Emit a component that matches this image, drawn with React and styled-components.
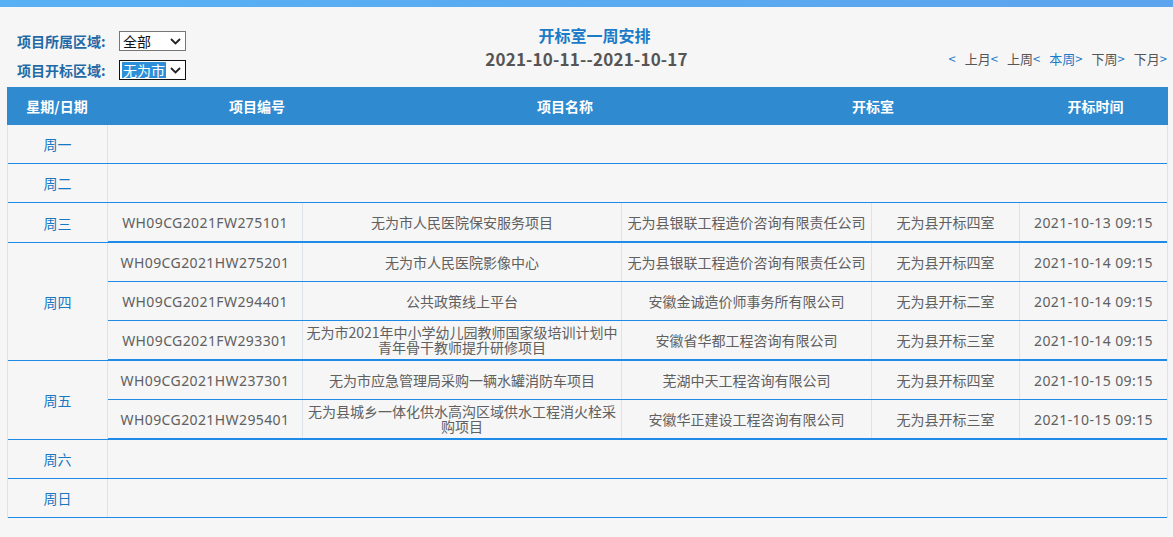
import React from 'react';
import styled, { createGlobalStyle } from 'styled-components';

const GlobalStyle = createGlobalStyle`
  html, body {
    margin: 0;
    padding: 0;
    background: #f6f6f6;
    font-family: "Noto Sans CJK SC", "Noto Sans", sans-serif;
  }
`;

const TopBar = styled.div`
  height: 7px;
  background: linear-gradient(90deg, #58b1f4 0%, #5ca4ee 100%);
`;

const Toolbar = styled.div`
  display: grid;
  grid-template-columns: 1fr auto 1fr;
  padding: 18px 6px 7px 6px;
`;

const Filters = styled.div`
  display: flex;
  flex-direction: column;
  gap: 9px;
  margin: 6px 0 0 11px;
`;

const FilterRow = styled.div`
  display: flex;
  align-items: center;
  height: 20px;
`;

const FilterLabel = styled.span`
  width: 102px;
  font-size: 14px;
  font-weight: 700;
  color: #2369a6;
`;

const SelectBox = styled.div`
  box-sizing: border-box;
  width: 67px;
  height: 20px;
  display: flex;
  align-items: center;
  justify-content: space-between;
  padding: 0 4px 0 2px;
  background: #fff;
  border: 1px solid ${p => (p.$focused ? '#111' : '#767676')};
  font-size: 14px;
  color: #111;
`;

const SelectText = styled.span`
  line-height: 16px;
  padding: 0 1px;
  background: ${p => (p.$focused ? '#2d8fd8' : 'transparent')};
  color: ${p => (p.$focused ? '#fff' : '#111')};
`;

const Chevron = () => (
  <svg width="11" height="7" viewBox="0 0 11 7">
    <path d="M1 1 L5.5 5.5 L10 1" fill="none" stroke="#222" strokeWidth="1.8" />
  </svg>
);

const TitleBlock = styled.div`
  display: flex;
  flex-direction: column;
  align-items: center;
  gap: 4px;
`;

const Title = styled.div`
  padding-left: 16px;
  font-size: 16px;
  line-height: 20px;
  font-weight: 700;
  color: #1b7bc8;
`;

const DateRange = styled.div`
  font-size: 17px;
  line-height: 20px;
  font-weight: 700;
  color: #555;
  letter-spacing: 0.2px;
`;

const Nav = styled.div`
  justify-self: end;
  align-self: end;
  margin-bottom: 11px;
  display: flex;
  font-size: 13px;
  line-height: 20px;
`;

const NavLink = styled.span`
  color: ${p => (p.$active ? '#1b7bc8' : '#555')};
  margin-left: 9px;
`;

const Arrow = styled.span`
  color: #1b7bc8;
`;

const Table = styled.div`
  margin: 0 5px 0 7px;
  border-left: 1px solid #dde3e9;
  border-right: 1px solid #dde3e9;
  font-size: 14px;
`;

const HeadRow = styled.div`
  display: grid;
  grid-template-columns: 100px 300px 316px 300px 1fr;
  height: 38px;
  margin: 0 -1px;
  background: #2f8ad0;
`;

const HeadCell = styled.div`
  display: flex;
  align-items: center;
  justify-content: center;
  color: #fff;
  font-weight: 700;
  font-size: 14px;
`;

const DayGroup = styled.div`
  display: flex;
  border-bottom: 1px solid #1e8be9;
`;

const DayCell = styled.div`
  flex: 0 0 99px;
  display: flex;
  align-items: center;
  justify-content: center;
  min-height: 38px;
  border-right: 1px solid #dde3e9;
  color: #1a78c2;
`;

const SubTable = styled.div`
  flex: 1;
  display: flex;
  flex-direction: column;
`;

const SubRow = styled.div`
  display: grid;
  grid-template-columns: 195px 319px 250px 148px 1fr;
  min-height: 38px;
  border-bottom: 1px solid #1e8be9;
`;

const Cell = styled.div`
  display: flex;
  align-items: center;
  justify-content: center;
  text-align: center;
  padding: 0 3px;
  line-height: 15px;
  color: #606060;
  border-right: 1px solid #dde3e9;
  font-family: ${p => (p.$latin ? '"Noto Sans", "Noto Sans CJK SC", sans-serif' : 'inherit')};
  letter-spacing: ${p => (p.$latin ? '0.4px' : 'normal')};

  &:last-child {
    border-right: none;
  }
`;

const headers = ['星期/日期', '项目编号', '项目名称', '开标室', '开标时间'];

const schedule = [
  { day: '周一', rows: [] },
  { day: '周二', rows: [] },
  {
    day: '周三',
    rows: [
      ['WH09CG2021FW275101', '无为市人民医院保安服务项目', '无为县银联工程造价咨询有限责任公司', '无为县开标四室', '2021-10-13 09:15'],
    ],
  },
  {
    day: '周四',
    rows: [
      ['WH09CG2021HW275201', '无为市人民医院影像中心', '无为县银联工程造价咨询有限责任公司', '无为县开标四室', '2021-10-14 09:15'],
      ['WH09CG2021FW294401', '公共政策线上平台', '安徽金诚造价师事务所有限公司', '无为县开标二室', '2021-10-14 09:15'],
      ['WH09CG2021FW293301', '无为市2021年中小学幼儿园教师国家级培训计划中青年骨干教师提升研修项目', '安徽省华都工程咨询有限公司', '无为县开标三室', '2021-10-14 09:15'],
    ],
  },
  {
    day: '周五',
    rows: [
      ['WH09CG2021HW237301', '无为市应急管理局采购一辆水罐消防车项目', '芜湖中天工程咨询有限公司', '无为县开标四室', '2021-10-15 09:15'],
      ['WH09CG2021HW295401', '无为县城乡一体化供水高沟区域供水工程消火栓采购项目', '安徽华正建设工程咨询有限公司', '无为县开标三室', '2021-10-15 09:15'],
    ],
  },
  { day: '周六', rows: [] },
  { day: '周日', rows: [] },
];

const latinColumns = [0, 4];

export default function App() {
  return (
    <>
      <GlobalStyle />
      <TopBar />
      <Toolbar>
        <Filters>
          <FilterRow>
            <FilterLabel>项目所属区域:</FilterLabel>
            <SelectBox>
              <SelectText>全部</SelectText>
              <Chevron />
            </SelectBox>
          </FilterRow>
          <FilterRow>
            <FilterLabel>项目开标区域:</FilterLabel>
            <SelectBox $focused>
              <SelectText $focused>无为市</SelectText>
              <Chevron />
            </SelectBox>
          </FilterRow>
        </Filters>
        <TitleBlock>
          <Title>开标室一周安排</Title>
          <DateRange>2021-10-11--2021-10-17</DateRange>
        </TitleBlock>
        <Nav>
          <Arrow>&lt;</Arrow><NavLink>上月</NavLink>
          <Arrow>&lt;</Arrow><NavLink>上周</NavLink>
          <Arrow>&lt;</Arrow><NavLink $active>本周</NavLink>
          <Arrow>&gt;</Arrow><NavLink>下周</NavLink>
          <Arrow>&gt;</Arrow><NavLink>下月</NavLink>
          <Arrow>&gt;</Arrow>
        </Nav>
      </Toolbar>
      <Table>
        <HeadRow>
          {headers.map(h => (
            <HeadCell key={h}>{h}</HeadCell>
          ))}
        </HeadRow>
        {schedule.map(group => (
          <DayGroup key={group.day}>
            <DayCell>{group.day}</DayCell>
            <SubTable>
              {group.rows.map(row => (
                <SubRow key={row[0]}>
                  {row.map((value, i) => (
                    <Cell key={i} $latin={latinColumns.includes(i)}>{value}</Cell>
                  ))}
                </SubRow>
              ))}
            </SubTable>
          </DayGroup>
        ))}
      </Table>
    </>
  );
}
